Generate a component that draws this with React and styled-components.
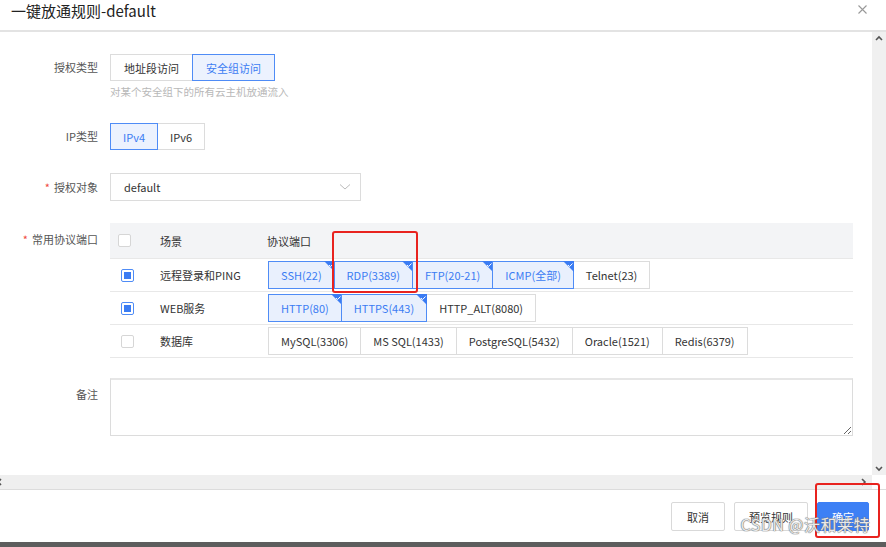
import React from "react";
import styled, { createGlobalStyle } from "styled-components";

const Global = createGlobalStyle`
  html, body { margin: 0; padding: 0; background: #fff; }
  body { font-family: "Noto Sans CJK SC", "Noto Sans", sans-serif; color: #333; }
  * { box-sizing: border-box; }
`;

const Page = styled.div`
  width: 886px;
  height: 547px;
  display: flex;
  flex-direction: column;
  background: #fff;
  position: relative;
  overflow: hidden;
`;

const Header = styled.div`
  height: 32px;
  flex: none;
  display: flex;
  align-items: flex-start;
  justify-content: space-between;
  padding: 0 18px 0 11px;
  border-bottom: 2px solid #e3e3e3;
`;

const Title = styled.div`
  font-size: 15px;
  line-height: 21px;
  color: #222;
`;

const Close = styled.div`
  width: 12px;
  height: 21px;
  display: flex;
  align-items: center;
  justify-content: center;
  color: #999;
  margin-top: -1px;
`;

const Body = styled.div`
  flex: 1;
  display: flex;
  min-height: 0;
`;

const Content = styled.div`
  flex: 1;
  padding: 22px 19px 0 0;
  overflow: hidden;
`;

const VScroll = styled.div`
  width: 14px;
  flex: none;
  background: #f0f0f0;
  display: flex;
  flex-direction: column;
  justify-content: space-between;
  align-items: center;
  padding: 3px 0 2px;
`;

const HScrollRow = styled.div`
  height: 15px;
  flex: none;
  display: flex;
`;

const HTrack = styled.div`
  flex: 1;
  background: #efefef;
  border-bottom: 1px solid #dcdcdc;
  display: flex;
  justify-content: space-between;
  align-items: center;
  padding: 0 4px 0 0;
  margin-left: -4px;
`;

const Corner = styled.div`
  width: 14px;
  background: #fff;
  border-bottom: 1px solid #dcdcdc;
`;

const Footer = styled.div`
  height: 52px;
  flex: none;
  display: flex;
  justify-content: flex-end;
  align-items: flex-start;
  gap: 9px;
  padding: 12px 17px 0 0;
  position: relative;
`;

const BottomBar = styled.div`
  height: 5px;
  flex: none;
  background: #5d5d5d;
`;

const FormItem = styled.div`
  display: grid;
  grid-template-columns: 98px 1fr;
  column-gap: 12px;
  margin-bottom: ${(p) => p.$mb}px;
`;

const Label = styled.div`
  text-align: right;
  font-size: 11px;
  line-height: ${(p) => p.$lh}px;
  color: #555;
  white-space: nowrap;
`;

const Req = styled.span`
  color: #f0483e;
  margin-right: 4px;
`;

const Control = styled.div`
  display: flex;
  flex-direction: column;
  align-items: flex-start;
  position: relative;
`;

const Seg = styled.div`
  display: flex;
`;

const SegBtn = styled.div`
  height: 27px;
  padding: 0 ${(p) => p.$px}px;
  display: flex;
  align-items: center;
  font-size: 11px;
  border: 1px solid ${(p) => (p.$on ? "#4f8cf6" : "#dcdcdc")};
  background: ${(p) => (p.$on ? "#ecf2fe" : "#fff")};
  color: ${(p) => (p.$on ? "#3b7cf3" : "#333")};
  margin-left: -1px;
  position: relative;
  z-index: ${(p) => (p.$on ? 1 : 0)};
  &:first-child { margin-left: 0; }
`;

const Hint = styled.div`
  font-size: 10.5px;
  color: #b8b8b8;
  margin-top: 4px;
  line-height: 13px;
`;

const Select = styled.div`
  width: 251px;
  height: 28px;
  border: 1px solid #dcdcdc;
  display: flex;
  align-items: center;
  justify-content: space-between;
  padding: 0 9px 0 13px;
  font-size: 11px;
  color: #333;
`;

const TableWrap = styled.div`
  width: 743px;
  position: relative;
`;

const Row = styled.div`
  display: grid;
  grid-template-columns: 50px 107px 1fr;
  align-items: center;
  height: ${(p) => (p.$head ? 36 : 33)}px;
  background: ${(p) => (p.$head ? "#f3f4f6" : "#fff")};
  border-bottom: 1px solid #e8e8e8;
  font-size: 11px;
  color: #333;
`;

const Check = styled.div`
  width: 13px;
  height: 13px;
  border: 1px solid ${(p) => (p.$on ? "#4f8cf6" : "#d6d6d6")};
  border-radius: 2px;
  background: #fff;
  margin-left: ${(p) => p.$ml}px;
  display: flex;
  align-items: center;
  justify-content: center;
  &::after {
    content: "";
    width: 7px;
    height: 7px;
    background: ${(p) => (p.$on ? "#3b7cf3" : "transparent")};
  }
`;

const Ports = styled.div`
  display: flex;
  margin-left: 1px;
`;

const Port = styled.div`
  height: 28px;
  padding: 0 12px;
  display: flex;
  align-items: center;
  font-size: 11px;
  border: 1px solid ${(p) => (p.$on ? "#4f8cf6" : "#dcdcdc")};
  background: ${(p) => (p.$on ? "#e9f0fd" : "#fff")};
  color: ${(p) => (p.$on ? "#3b7cf3" : "#333")};
  margin-left: -1px;
  position: relative;
  z-index: ${(p) => (p.$on ? 1 : 0)};
  &:first-child { margin-left: 0; }
`;

const Tick = styled.svg`
  position: absolute;
  top: -1px;
  right: -1px;
`;

const RedBox = styled.div`
  position: absolute;
  border: 2px solid #e8231f;
  border-radius: 3px;
  pointer-events: none;
  z-index: 5;
`;

const Textarea = styled.textarea`
  width: 743px;
  height: 58px;
  border: 1px solid #dcdcdc;
  border-top: 2px solid #e6e6e6;
  resize: both;
  font-family: inherit;
  outline: none;
  display: block;
`;

const Btn = styled.div`
  height: 29px;
  padding: 0 ${(p) => p.$px}px;
  display: flex;
  align-items: center;
  font-size: 11px;
  border: 1px solid ${(p) => (p.$primary ? "#3d80f5" : "#d9d9d9")};
  background: ${(p) => (p.$primary ? "#3d80f5" : "#fff")};
  color: ${(p) => (p.$primary ? "#fff" : "#333")};
  border-radius: 2px;
`;

const Watermark = styled.div`
  position: absolute;
  right: 16px;
  bottom: 6px;
  font-family: "Noto Sans CJK SC", "Noto Sans", sans-serif;
  font-size: 16px;
  letter-spacing: 0.5px;
  color: rgba(255, 255, 255, 0.85);
  text-shadow: 0 0 1px #777, 0 0 1px #777, 0 0 1px #777;
  pointer-events: none;
  z-index: 6;
`;

const Chev = ({ d }) => {
  const paths = {
    up: "M1 5 L4 2 L7 5",
    down: "M1 2 L4 5 L7 2",
    left: "M5 1 L2 4 L5 7",
    right: "M2 1 L5 4 L2 7",
  };
  return (
    <svg width="8" height="8" viewBox="0 0 8 8">
      <path d={paths[d]} fill="none" stroke="#555" strokeWidth="1.6" />
    </svg>
  );
};

const CornerTick = () => (
  <Tick width="11" height="11" viewBox="0 0 11 11">
    <path d="M0 0 H11 V11 Z" fill="#3b7cf3" />
    <path d="M5 4 L6.6 5.5 L9.5 2.5" fill="none" stroke="#fff" strokeWidth="1" />
  </Tick>
);

const rows = [
  {
    name: "远程登录和PING",
    on: true,
    ports: [
      ["SSH(22)", true],
      ["RDP(3389)", true],
      ["FTP(20-21)", true],
      ["ICMP(全部)", true],
      ["Telnet(23)", false],
    ],
  },
  {
    name: "WEB服务",
    on: true,
    ports: [
      ["HTTP(80)", true],
      ["HTTPS(443)", true],
      ["HTTP_ALT(8080)", false],
    ],
  },
  {
    name: "数据库",
    on: false,
    ports: [
      ["MySQL(3306)", false],
      ["MS SQL(1433)", false],
      ["PostgreSQL(5432)", false],
      ["Oracle(1521)", false],
      ["Redis(6379)", false],
    ],
  },
];

export default function App() {
  return (
    <>
      <Global />
      <Page>
        <Header>
          <Title>一键放通规则-default</Title>
          <Close>
            <svg width="9" height="9" viewBox="0 0 9 9">
              <path d="M0.5 0.5 L8.5 8.5 M8.5 0.5 L0.5 8.5" stroke="#999" strokeWidth="1.1" />
            </svg>
          </Close>
        </Header>
        <Body>
          <Content>
            <FormItem $mb={25}>
              <Label $lh={27}>授权类型</Label>
              <Control>
                <Seg>
                  <SegBtn $px={13}>地址段访问</SegBtn>
                  <SegBtn $px={13} $on>安全组访问</SegBtn>
                </Seg>
                <Hint>对某个安全组下的所有云主机放通流入</Hint>
              </Control>
            </FormItem>
            <FormItem $mb={23}>
              <Label $lh={27}>IP类型</Label>
              <Control>
                <Seg>
                  <SegBtn $px={12} $on>IPv4</SegBtn>
                  <SegBtn $px={12}>IPv6</SegBtn>
                </Seg>
              </Control>
            </FormItem>
            <FormItem $mb={22}>
              <Label $lh={28}>
                <Req>*</Req>授权对象
              </Label>
              <Control>
                <Select>
                  <span>default</span>
                  <svg width="12" height="8" viewBox="0 0 12 8">
                    <path d="M1 1.5 L6 6 L11 1.5" fill="none" stroke="#bbb" strokeWidth="1" />
                  </svg>
                </Select>
              </Control>
            </FormItem>
            <FormItem $mb={20}>
              <Label $lh={33}>
                <Req>*</Req>常用协议端口
              </Label>
              <Control>
                <TableWrap>
                  <Row $head>
                    <Check $ml={8} />
                    <span>场景</span>
                    <span>协议端口</span>
                  </Row>
                  {rows.map((r) => (
                    <Row key={r.name}>
                      <Check $ml={11} $on={r.on} />
                      <span>{r.name}</span>
                      <Ports>
                        {r.ports.map(([t, on]) => (
                          <Port key={t} $on={on}>
                            {t}
                            {on && <CornerTick />}
                          </Port>
                        ))}
                      </Ports>
                    </Row>
                  ))}
                  <RedBox style={{ left: 222, top: 8, width: 86, height: 62 }} />
                </TableWrap>
              </Control>
            </FormItem>
            <FormItem $mb={0}>
              <Label $lh={33}>备注</Label>
              <Control>
                <Textarea />
              </Control>
            </FormItem>
          </Content>
          <VScroll>
            <Chev d="up" />
            <Chev d="down" />
          </VScroll>
        </Body>
        <HScrollRow>
          <HTrack>
            <Chev d="left" />
            <Chev d="right" />
          </HTrack>
          <Corner />
        </HScrollRow>
        <Footer>
          <Btn $px={15}>取消</Btn>
          <Btn $px={14}>预览规则</Btn>
          <Btn $px={14} $primary>确定</Btn>
          <RedBox style={{ right: 6, top: -7, width: 65, height: 55 }} />
          <Watermark>CSDN @沃和莱特</Watermark>
        </Footer>
        <BottomBar />
      </Page>
    </>
  );
}
